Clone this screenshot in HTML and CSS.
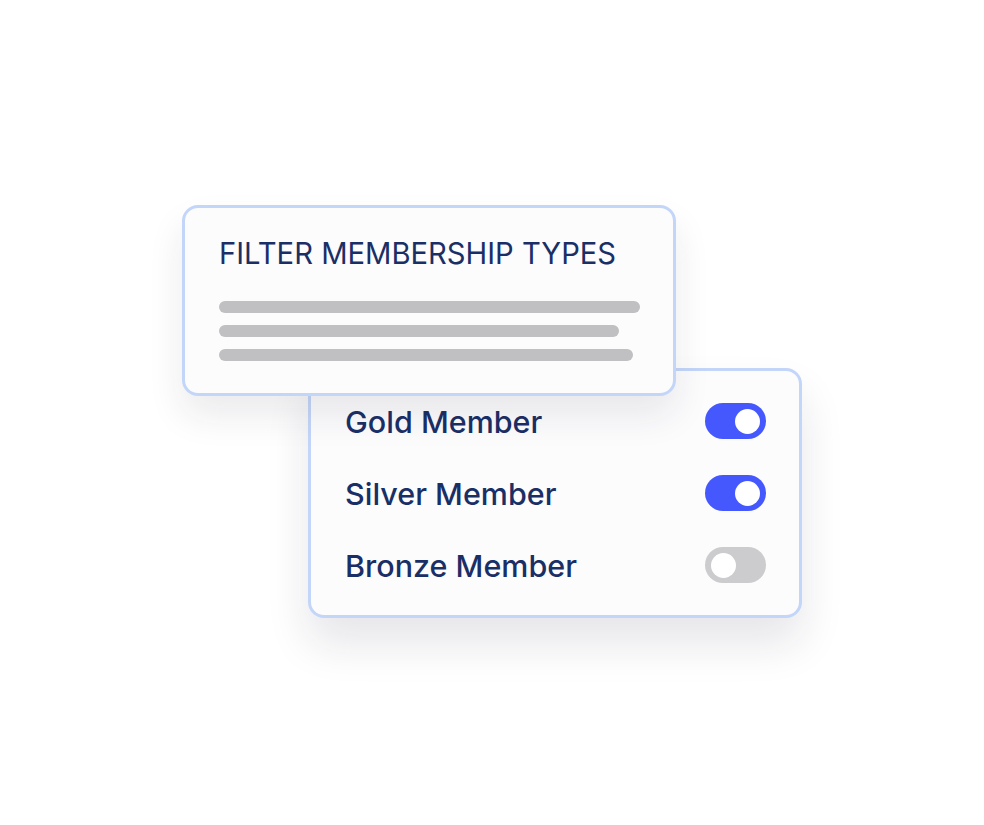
FILE: index.html
```
<!DOCTYPE html>
<html lang="en">
<head>
    <meta charset="UTF-8">
    <meta name="viewport" content="width=device-width, initial-scale=1.0">
    <title>Filter Membership Types</title>
    <link rel="stylesheet" href="styles.css">
</head>
<body>
    <div class="stage">
        <div class="card filter-card">
            <h2 class="filter-title">FILTER MEMBERSHIP TYPES</h2>
            <div class="placeholder">
                <span class="bar bar-1"></span>
                <span class="bar bar-2"></span>
                <span class="bar bar-3"></span>
            </div>
        </div>

        <div class="card member-card">
            <div class="member-row">
                <span class="member-name">Gold Member</span>
                <span class="toggle on"><span class="knob"></span></span>
            </div>
            <div class="member-row">
                <span class="member-name">Silver Member</span>
                <span class="toggle on"><span class="knob"></span></span>
            </div>
            <div class="member-row">
                <span class="member-name">Bronze Member</span>
                <span class="toggle"><span class="knob"></span></span>
            </div>
        </div>
    </div>
</body>
</html>
```

FILE: styles.css
```
body {
    margin: 0;
    background-color: #ffffff;
    font-family: Inter, "Noto Sans", sans-serif;
    color: #1a2f66;
}
.stage {
    display: flex;
    flex-direction: column;
    padding: 205px 0 120px 182px;
}
.card {
    box-sizing: border-box;
    width: 494px;
    border: 3px solid #c3d5f8;
    border-radius: 16px;
    background-color: #fcfcfd;
}
.filter-card {
    position: relative;
    z-index: 2;
    height: 191px;
    padding: 27px 34px 0 34px;
    box-shadow: 0 20px 36px rgba(30, 30, 60, 0.09);
}
.filter-title {
    margin: 0;
    font-size: 29.2px;
    font-weight: 400;
    line-height: 38px;
}
.placeholder {
    display: flex;
    flex-direction: column;
    gap: 12px;
    margin-top: 28px;
}
.bar {
    display: block;
    height: 12px;
    border-radius: 6px;
    background-color: #c0bfc1;
}
.bar-1 { width: 421px; }
.bar-2 { width: 400px; }
.bar-3 { width: 414px; }
.member-card {
    margin: -28px 0 0 126px;
    height: 250px;
    padding: 14px 33px 0 34px;
    box-shadow: 0 26px 44px rgba(30, 30, 60, 0.11);
}
.member-row {
    display: flex;
    align-items: center;
    justify-content: space-between;
    height: 72px;
}
.member-name {
    font-size: 30.5px;
    font-weight: 500;
}
.toggle {
    display: flex;
    align-items: center;
    box-sizing: border-box;
    width: 61px;
    height: 36px;
    padding: 0 6px;
    border-radius: 18px;
    background-color: #cccbcd;
}
.toggle.on {
    justify-content: flex-end;
    background-color: #4558fd;
}
.knob {
    width: 25px;
    height: 25px;
    border-radius: 50%;
    background-color: #ffffff;
}
```
